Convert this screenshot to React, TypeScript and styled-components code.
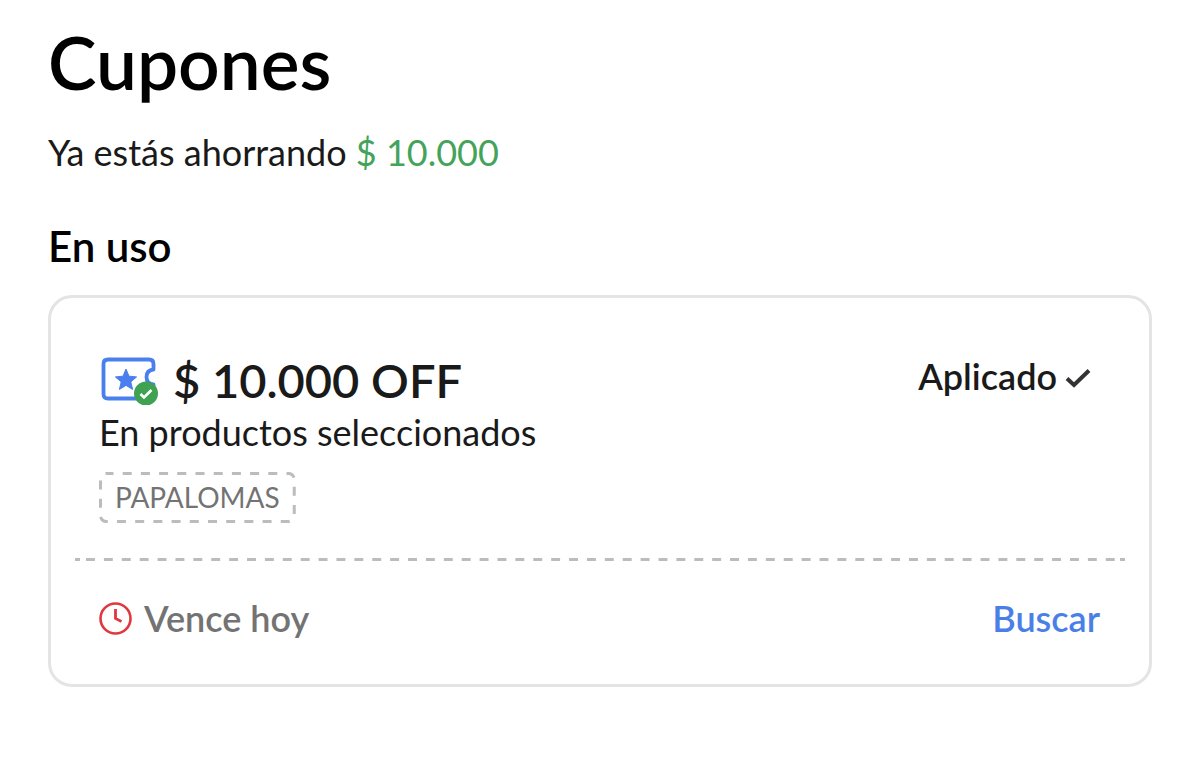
import React from "react";
import styled, { createGlobalStyle } from "styled-components";

const GlobalStyle = createGlobalStyle`
  *, *::before, *::after { box-sizing: border-box; }
  body {
    margin: 0;
    background: #fff;
    color: #1a1a1a;
    font-family: Lato, "Open Sans", sans-serif;
    font-size: 36px;
    line-height: 40px;
  }
`;

const Page = styled.main`
  padding: 22px 48px 48px;
`;

const Title = styled.h1`
  margin: 0;
  color: #000;
  font-size: 73px;
  font-weight: 600;
  line-height: 80px;
`;

const Savings = styled.p`
  margin: 30px 0 0;
`;

const Amount = styled.span`
  color: #43a35a;
`;

const SectionTitle = styled.h2`
  margin: 48px 0 0;
  color: #000;
  font-size: 42px;
  font-weight: 600;
  line-height: 52px;
`;

const Card = styled.article`
  margin-top: 23px;
  padding: 54px 24px 46px;
  border: 3px solid #e4e4e4;
  border-radius: 24px;
`;

const CardTop = styled.div`
  display: flex;
  justify-content: space-between;
  align-items: flex-start;
  padding: 0 34px 0 24px;
`;

const Offer = styled.h3`
  display: flex;
  align-items: center;
  gap: 14px;
  margin: 0;
  font-size: 47px;
  font-weight: 600;
  line-height: 56px;
`;

const Scope = styled.p`
  margin: 4px 0 0;
`;

const Code = styled.span`
  position: relative;
  display: inline-block;
  margin-top: 20px;
  padding: 7px 16px 8px;
  color: #737373;
  font-size: 28px;
  line-height: 36px;
`;

const CodeOutline = styled.svg`
  position: absolute;
  inset: 0;
  width: 100%;
  height: 100%;

  rect {
    width: calc(100% - 3px);
    height: calc(100% - 3px);
  }
`;

const CodeLine = styled.div`
  display: flex;
`;

const Status = styled.div`
  display: flex;
  align-items: center;
  gap: 8px;
  padding-top: 4px;
  font-weight: 600;
`;

const Divider = styled.hr`
  height: 3px;
  margin: 35px 0 0;
  padding: 0 1px 0 11px;
  border: 0;
  background-image:
    linear-gradient(#bcbcbc, #bcbcbc),
    linear-gradient(#bcbcbc, #bcbcbc),
    linear-gradient(90deg, #bcbcbc 50%, transparent 50%);
  background-origin: border-box, border-box, content-box;
  background-clip: border-box, border-box, content-box;
  background-position: left top, right top, left top;
  background-repeat: no-repeat, no-repeat, round;
  background-size: 5px 3px, 5px 3px, 18px 3px;
`;

const CardBottom = styled.div`
  display: flex;
  justify-content: space-between;
  align-items: center;
  padding: 37px 25px 0 24px;
  font-weight: 600;
`;

const Expiry = styled.div`
  display: flex;
  align-items: center;
  gap: 12px;
  color: #737373;
`;

const SearchLink = styled.a`
  color: #4a7fe8;
  text-decoration: none;
`;

const CouponIcon = () => (
  <svg width="60" height="50" viewBox="0 0 60 50" fill="none" aria-hidden="true">
    <path
      d="M9 4.500H50Q54.500 4.500 54.500 9V14.500C50 15 47.500 18 47.500 22C47.500 26 50 29 54.500 29.500V36Q54.500 43.500 48 43.500H9Q4.500 43.500 4.500 39V9Q4.500 4.500 9 4.500Z"
      stroke="#4a80ee"
      strokeWidth="3.800"
      strokeLinejoin="round"
    />
    <path
      d="M27 14L30 21.200L37.600 21.900L31.800 26.900L33.600 34.400L27 30.400L20.400 34.400L22.200 26.900L16.400 21.900L24 21.200Z"
      fill="#4a80ee"
      stroke="#4a80ee"
      strokeLinejoin="round"
    />
    <circle cx="47" cy="38.500" r="12" fill="#3fa152" />
    <path d="M41.500 39L45 42.500L52.500 35" stroke="#fff" strokeWidth="2.600" />
  </svg>
);

const CheckIcon = () => (
  <svg width="26" height="24" viewBox="0 0 26 24" fill="none" aria-hidden="true">
    <path d="M2 14.500L9 21L24 6.500" stroke="#333" strokeWidth="4" />
  </svg>
);

const ClockIcon = () => (
  <svg width="33" height="33" viewBox="0 0 33 33" fill="none" aria-hidden="true">
    <circle cx="16.500" cy="16.500" r="15" stroke="#e0383e" strokeWidth="2.600" />
    <path d="M16.500 7V16.500L22.500 19.500" stroke="#e0383e" strokeWidth="2.800" />
  </svg>
);

export default function App() {
  return (
    <>
      <GlobalStyle />
      <Page>
        <Title>Cupones</Title>
        <Savings>
          Ya estás ahorrando <Amount>$ 10.000</Amount>
        </Savings>
        <SectionTitle>En uso</SectionTitle>
        <Card>
          <CardTop>
            <div>
              <Offer>
                <CouponIcon />
                $ 10.000 OFF
              </Offer>
              <Scope>En productos seleccionados</Scope>
              <CodeLine>
                <Code>
                  PAPALOMAS
                  <CodeOutline aria-hidden="true">
                    <rect
                      x="1.5"
                      y="1.5"
                      rx="6"
                      fill="none"
                      stroke="#bcbcbc"
                      strokeWidth="3"
                      strokeDasharray="9 9.2"
                      strokeDashoffset="2"
                    />
                  </CodeOutline>
                </Code>
              </CodeLine>
            </div>
            <Status>
              Aplicado
              <CheckIcon />
            </Status>
          </CardTop>
          <Divider />
          <CardBottom>
            <Expiry>
              <ClockIcon />
              Vence hoy
            </Expiry>
            <SearchLink href="#buscar">Buscar</SearchLink>
          </CardBottom>
        </Card>
      </Page>
    </>
  );
}
